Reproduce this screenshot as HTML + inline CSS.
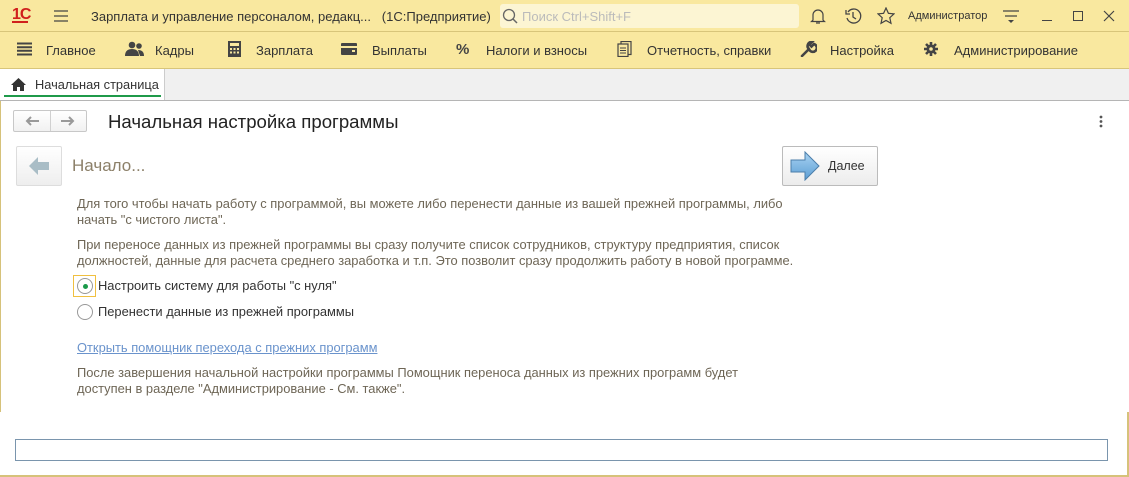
<!DOCTYPE html>
<html><head><meta charset="utf-8"><style>
*{margin:0;padding:0;box-sizing:border-box}
body{width:1129px;height:477px;overflow:hidden;background:#fff;font-family:"Liberation Sans",Arial,sans-serif;font-size:13px;color:#333;position:relative}
.abs{position:absolute}
#top{left:0;top:0;width:1129px;height:32px;background:#f9e89f;border-bottom:1px solid #d8c57a}
#sec{left:0;top:32px;width:1129px;height:37px;background:#f9e89f;border-bottom:1px solid #d8c57a}
#tabs{left:0;top:69px;width:1129px;height:32px;background:#f0f0f0;border-bottom:1px solid #b5b5b5}
.t{position:absolute;white-space:nowrap}
.txt{color:#6e6656;font-size:12.9px;line-height:16px;white-space:nowrap}
</style></head><body>
<div id="top" class="abs">
  <div class="t" style="left:12px;top:6px;font-weight:bold;color:#d0201c;font-size:16px;letter-spacing:-1px">1С</div>
  <div class="abs" style="left:12px;top:21px;width:16px;height:2px;background:#d0201c"></div>
  <svg class="abs" style="left:54px;top:10px" width="14" height="12"><path d="M0 1h14M0 6h14M0 11h14" stroke="#444" stroke-width="1.2"/></svg>
  <div class="t" style="left:91px;top:9px;color:#333">Зарплата и управление персоналом, редакц...&nbsp;&nbsp; (1С:Предприятие)</div>
  <div class="abs" style="left:500px;top:4px;width:299px;height:24px;background:#fcf5d3;border-radius:3px"></div>
  <svg class="abs" style="left:502px;top:8px" width="16" height="16"><circle cx="7" cy="7" r="5.5" fill="none" stroke="#666" stroke-width="1.3"/><path d="M11 11l4 4" stroke="#666" stroke-width="1.5"/></svg>
  <div class="t" style="left:522px;top:9px;color:#bbb">Поиск Ctrl+Shift+F</div>
  <svg class="abs" style="left:810px;top:7px" width="16" height="18"><path d="M3 13V8a5 5 0 0110 0v5l1.5 1.5h-13z M6 16h4" fill="none" stroke="#444" stroke-width="1.2"/></svg>
  <svg class="abs" style="left:844px;top:7px" width="18" height="18"><path d="M4 5a7 7 0 11-1 6" fill="none" stroke="#444" stroke-width="1.3"/><path d="M2 3v4h4" fill="none" stroke="#444" stroke-width="1.3"/><path d="M9 5v5l3 2" fill="none" stroke="#444" stroke-width="1.3"/></svg>
  <svg class="abs" style="left:877px;top:7px" width="18" height="18"><path d="M9 1l2.4 5.3 5.6.6-4.2 3.8 1.2 5.6L9 13.5 4 16.3l1.2-5.6L1 6.9l5.6-.6z" fill="none" stroke="#444" stroke-width="1.2"/></svg>
  <div class="t" style="left:908px;top:10px;font-size:11px;color:#333">Администратор</div>
  <svg class="abs" style="left:1003px;top:10px" width="16" height="14"><path d="M0 1h16M2 6h12" stroke="#444" stroke-width="1.2"/><path d="M5 10h6l-3 3z" fill="#444"/></svg>
  <div class="abs" style="left:1042px;top:20px;width:10px;height:1.3px;background:#444"></div>
  <div class="abs" style="left:1073px;top:11px;width:10px;height:10px;border:1.3px solid #444"></div>
  <svg class="abs" style="left:1103px;top:10px" width="12" height="12"><path d="M1 1l10 10M11 1L1 11" stroke="#444" stroke-width="1.2"/></svg>
</div>
<div id="sec" class="abs">
  <svg class="abs" style="left:17px;top:10px" width="15" height="14"><path d="M0 1.5h15M0 5.2h15M0 8.8h15M0 12.5h15" stroke="#444" stroke-width="2"/></svg>
  <div class="t" style="left:46px;top:11px">Главное</div>
  <svg class="abs" style="left:125px;top:9px" width="20" height="16"><circle cx="7" cy="4" r="3.3" fill="#444"/><path d="M0 15c0-5 3-7 7-7s7 2 7 7z" fill="#444"/><circle cx="14" cy="5" r="2.8" fill="#444"/><path d="M13 9c4 0 6 2 6 6h-4z" fill="#444"/></svg>
  <div class="t" style="left:155px;top:11px">Кадры</div>
  <svg class="abs" style="left:228px;top:9px" width="13" height="16"><rect x="0" y="0" width="13" height="16" fill="#444"/><rect x="2" y="2" width="9" height="3" fill="#f9e89f"/><g fill="#f9e89f"><rect x="2" y="7" width="2" height="2"/><rect x="5.5" y="7" width="2" height="2"/><rect x="9" y="7" width="2" height="2"/><rect x="2" y="10.5" width="2" height="2"/><rect x="5.5" y="10.5" width="2" height="2"/><rect x="9" y="10.5" width="2" height="2"/></g></svg>
  <div class="t" style="left:256px;top:11px">Зарплата</div>
  <svg class="abs" style="left:341px;top:11px" width="16" height="12"><rect width="16" height="12" rx="1" fill="#444"/><rect x="0" y="3" width="16" height="2" fill="#f9e89f"/><rect x="11" y="7" width="3" height="2" fill="#f9e89f"/></svg>
  <div class="t" style="left:372px;top:11px">Выплаты</div>
  <div class="t" style="left:456px;top:9px;font-weight:bold;font-size:15px;color:#444">%</div>
  <div class="t" style="left:486px;top:11px">Налоги и взносы</div>
  <svg class="abs" style="left:617px;top:9px" width="15" height="16"><rect x="4" y="0.5" width="10" height="13" fill="none" stroke="#444" stroke-width="1.2"/><rect x="1" y="3" width="10" height="12.5" fill="#f9e89f" stroke="#444" stroke-width="1.2"/><path d="M3 7h6M3 9.5h6M3 12h6" stroke="#444"/></svg>
  <div class="t" style="left:647px;top:11px">Отчетность, справки</div>
  <svg class="abs" style="left:800px;top:9px" width="17" height="16"><path d="M2 15L9 8M9 8a4 4 0 105-5l-2.5 2.5-2-2L12 1a4 4 0 00-3 7" fill="none" stroke="#444" stroke-width="2.6" stroke-linecap="round"/></svg>
  <div class="t" style="left:830px;top:11px">Настройка</div>
  <svg class="abs" style="left:923px;top:9px" width="16" height="16"><g stroke="#444" stroke-width="2.6"><path d="M8 1v14M1 8h14M3 3l10 10M13 3L3 13"/></g><circle cx="8" cy="8" r="4.5" fill="#444"/><circle cx="8" cy="8" r="1.8" fill="#f9e89f"/></svg>
  <div class="t" style="left:954px;top:11px">Администрирование</div>
</div>
<div id="tabs" class="abs">
  <div class="abs" style="left:0;top:0;width:165px;height:31px;background:#fff;border-right:1px solid #ccc"></div>
  <svg class="abs" style="left:11px;top:9px" width="15" height="13"><path d="M7.5 0L0 7h2v6h4V9h3v4h4V7h2z" fill="#333"/></svg>
  <div class="t" style="left:35px;top:8px;font-size:12.8px">Начальная страница</div>
  <div class="abs" style="left:4px;top:26px;width:157px;height:2px;background:#1f9a4a"></div>
</div>
<div class="abs" style="left:0;top:101px;width:1px;height:311px;background:#d6c27a"></div>
<div class="abs" style="left:1127px;top:412px;width:2px;height:65px;background:#d6c27a"></div>
<div class="abs" style="left:0;top:475px;width:1129px;height:2px;background:#d6c27a"></div>
<div class="abs" style="left:13px;top:110px;width:74px;height:22px;border:1px solid #c8c8c8;border-radius:2px;background:linear-gradient(#fff,#f1f1f1)"></div>
<div class="abs" style="left:50px;top:111px;width:1px;height:20px;background:#d0d0d0"></div>
<svg class="abs" style="left:25px;top:116px" width="14" height="10"><path d="M14 5H2M6 1L2 5l4 4" fill="none" stroke="#999" stroke-width="2"/></svg>
<svg class="abs" style="left:61px;top:116px" width="14" height="10"><path d="M0 5h12M8 1l4 4-4 4" fill="none" stroke="#999" stroke-width="2"/></svg>
<div class="t" style="left:108px;top:111px;font-size:18.6px;color:#222">Начальная настройка программы</div>
<svg class="abs" style="left:1099px;top:115px" width="4" height="13"><circle cx="2" cy="2" r="1.4" fill="#555"/><circle cx="2" cy="6.5" r="1.4" fill="#555"/><circle cx="2" cy="11" r="1.4" fill="#555"/></svg>
<div class="abs" style="left:16px;top:146px;width:46px;height:40px;border:1px solid #ddd;border-radius:2px;background:linear-gradient(#fff,#eee)"></div>
<svg class="abs" style="left:28px;top:156px" width="22" height="20"><path d="M1 10L10 1v5h11v8H10v5z" fill="#a9bdc6"/></svg>
<div class="t" style="left:72px;top:156px;font-size:17px;color:#8c8069">Начало...</div>
<div class="abs" style="left:782px;top:146px;width:96px;height:40px;border:1px solid #bbb;border-radius:2px;background:linear-gradient(#fff,#ececec)"></div>
<svg class="abs" style="left:790px;top:151px" width="30" height="30"><defs><linearGradient id="g" x1="0" y1="0" x2="0" y2="1"><stop offset="0" stop-color="#a9d3f2"/><stop offset="1" stop-color="#5c9ed4"/></linearGradient></defs><path d="M1 9h14V1l14 14-14 14v-8H1z" fill="url(#g)" stroke="#4b7eaa" stroke-width="1"/></svg>
<div class="t" style="left:828px;top:159px;font-size:12.5px;color:#333">Далее</div>
<div class="abs txt" style="left:77px;top:196px">Для того чтобы начать работу с программой, вы можете либо перенести данные из вашей прежней программы, либо<br>начать "с чистого листа".</div>
<div class="abs txt" style="left:77px;top:237px">При переносе данных из прежней программы вы сразу получите список сотрудников, структуру предприятия, список<br>должностей, данные для расчета среднего заработка и т.п. Это позволит сразу продолжить работу в новой программе.</div>
<div class="abs" style="left:73px;top:275px;width:23px;height:22px;border:1px solid #f0c040"></div>
<div class="abs" style="left:77px;top:278px;width:16px;height:16px;border:1px solid #999;border-radius:50%;background:#fff"></div>
<div class="abs" style="left:83px;top:284px;width:5px;height:5px;border-radius:50%;background:#1a9a4a"></div>
<div class="t" style="left:98px;top:278px;color:#333;font-size:12.9px">Настроить систему для работы "с нуля"</div>
<div class="abs" style="left:77px;top:304px;width:16px;height:16px;border:1px solid #999;border-radius:50%;background:#fff"></div>
<div class="t" style="left:98px;top:304px;color:#333;font-size:12.9px">Перенести данные из прежней программы</div>
<div class="t" style="left:77px;top:340px;color:#6a93cc;font-size:12.9px;text-decoration:underline">Открыть помощник перехода с прежних программ</div>
<div class="abs txt" style="left:77px;top:365px">После завершения начальной настройки программы Помощник переноса данных из прежних программ будет<br>доступен в разделе "Администрирование - См. также".</div>
<div class="abs" style="left:15px;top:439px;width:1093px;height:22px;border:1px solid #7a95ad"></div>
</body></html>
